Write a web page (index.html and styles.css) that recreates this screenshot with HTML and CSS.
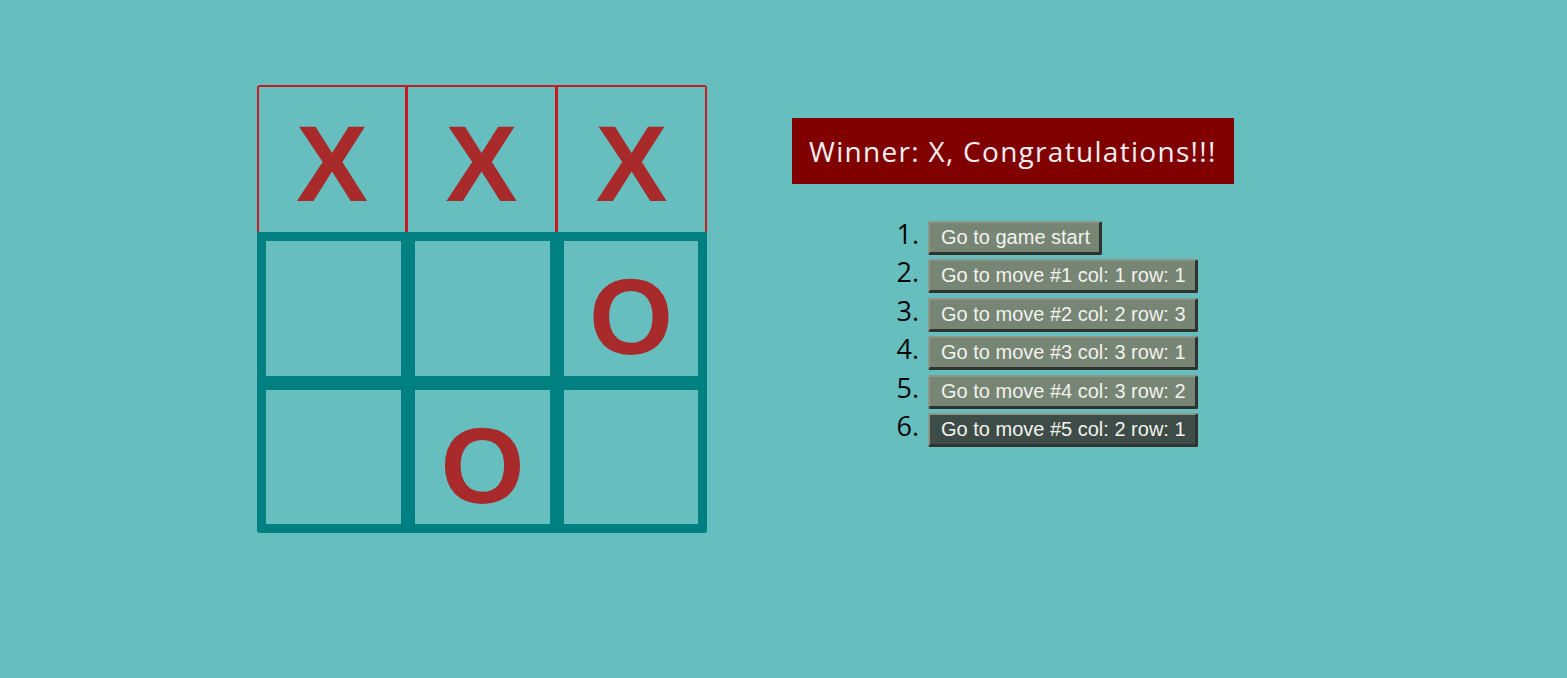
FILE: index.html
```html
<!DOCTYPE html>
<html lang="en">
<head>
<meta charset="utf-8">
<title>Tic Tac Toe</title>
<link rel="stylesheet" href="styles.css">
</head>
<body>
<div class="game">
  <div class="board">
    <div class="board-row win-row">
      <button class="square win">X</button>
      <button class="square win">X</button>
      <button class="square win">X</button>
    </div>
    <div class="board-rest">
      <button class="square"></button>
      <button class="square"></button>
      <button class="square">O</button>
      <button class="square"></button>
      <button class="square">O</button>
      <button class="square"></button>
    </div>
  </div>
  <div class="game-info">
    <div class="status">Winner: X, Congratulations!!!</div>
    <ol class="moves">
      <li><button class="move">Go to game start</button></li>
      <li><button class="move">Go to move #1 col: 1 row: 1</button></li>
      <li><button class="move">Go to move #2 col: 2 row: 3</button></li>
      <li><button class="move">Go to move #3 col: 3 row: 1</button></li>
      <li><button class="move">Go to move #4 col: 3 row: 2</button></li>
      <li><button class="move current">Go to move #5 col: 2 row: 1</button></li>
    </ol>
  </div>
</div>
</body>
</html>
```
FILE: styles.css
```css
html, body {
  margin: 0;
  padding: 0;
  background: #66bebf;
  height: 100%;
}

.game {
  display: flex;
  align-items: flex-start;
  padding: 85px 0 0 257px;
}

.board {
  width: 450px;
}

.win-row {
  display: flex;
}

.square {
  box-sizing: border-box;
  margin: 0;
  padding: 22px 0 0;
  background: transparent;
  color: #a82a2a;
  font: bold 108px/108px "Liberation Sans", Arial, sans-serif;
  display: flex;
  justify-content: center;
  align-items: flex-start;
  cursor: pointer;
}

.square.win {
  width: 150px;
  height: 147px;
  border: 2px solid #c81a20;
  border-bottom: none;
  padding-top: 23px;
}

.square.win + .square.win {
  border-left-width: 1px;
}

.win-row .square:first-child {
  border-top-left-radius: 3px;
}

.win-row .square:last-child {
  border-top-right-radius: 3px;
}

.board-rest {
  display: grid;
  grid-template-columns: 149px 149px 148px;
  grid-template-rows: 149px 148px;
  border: 2px solid #008080;
  border-radius: 0 0 3px 3px;
}

.board-rest .square {
  width: 100%;
  height: 100%;
  border: 7px solid #008080;
}

.game-info {
  margin-left: 85px;
  padding-top: 33px;
}

.status {
  background: #800000;
  color: #f6eef0;
  font-family: "Century Gothic", "Open Sans", sans-serif;
  font-weight: 400;
  font-size: 28px;
  letter-spacing: 1.3px;
  line-height: 34px;
  padding: 16px 17px;
  white-space: nowrap;
}

.moves {
  list-style: none;
  margin: 37px 0 0;
  padding: 0 0 0 93px;
  counter-reset: move;
}

.moves li {
  counter-increment: move;
  display: flex;
  align-items: baseline;
  height: 38.4px;
}

.moves li::before {
  content: counter(move) ".";
  width: 34px;
  margin-right: 9px;
  text-align: right;
  font-family: "Century Gothic", "Open Sans", sans-serif;
  font-weight: 400;
  font-size: 27px;
  line-height: 26px;
  color: #0a0a0a;
}

.move {
  margin: 0;
  padding: 3px 9px 3px 11px;
  font: 20px/23px "Liberation Sans", Arial, sans-serif;
  color: #f2f2ee;
  background: #778575;
  border-style: solid;
  border-width: 2px 3px 3px 2px;
  border-color: #8c9689 #2f332f #2f332f #8c9689;
  border-radius: 2px;
  cursor: pointer;
  white-space: nowrap;
}

.move.current {
  background: #3e4c47;
}
```
